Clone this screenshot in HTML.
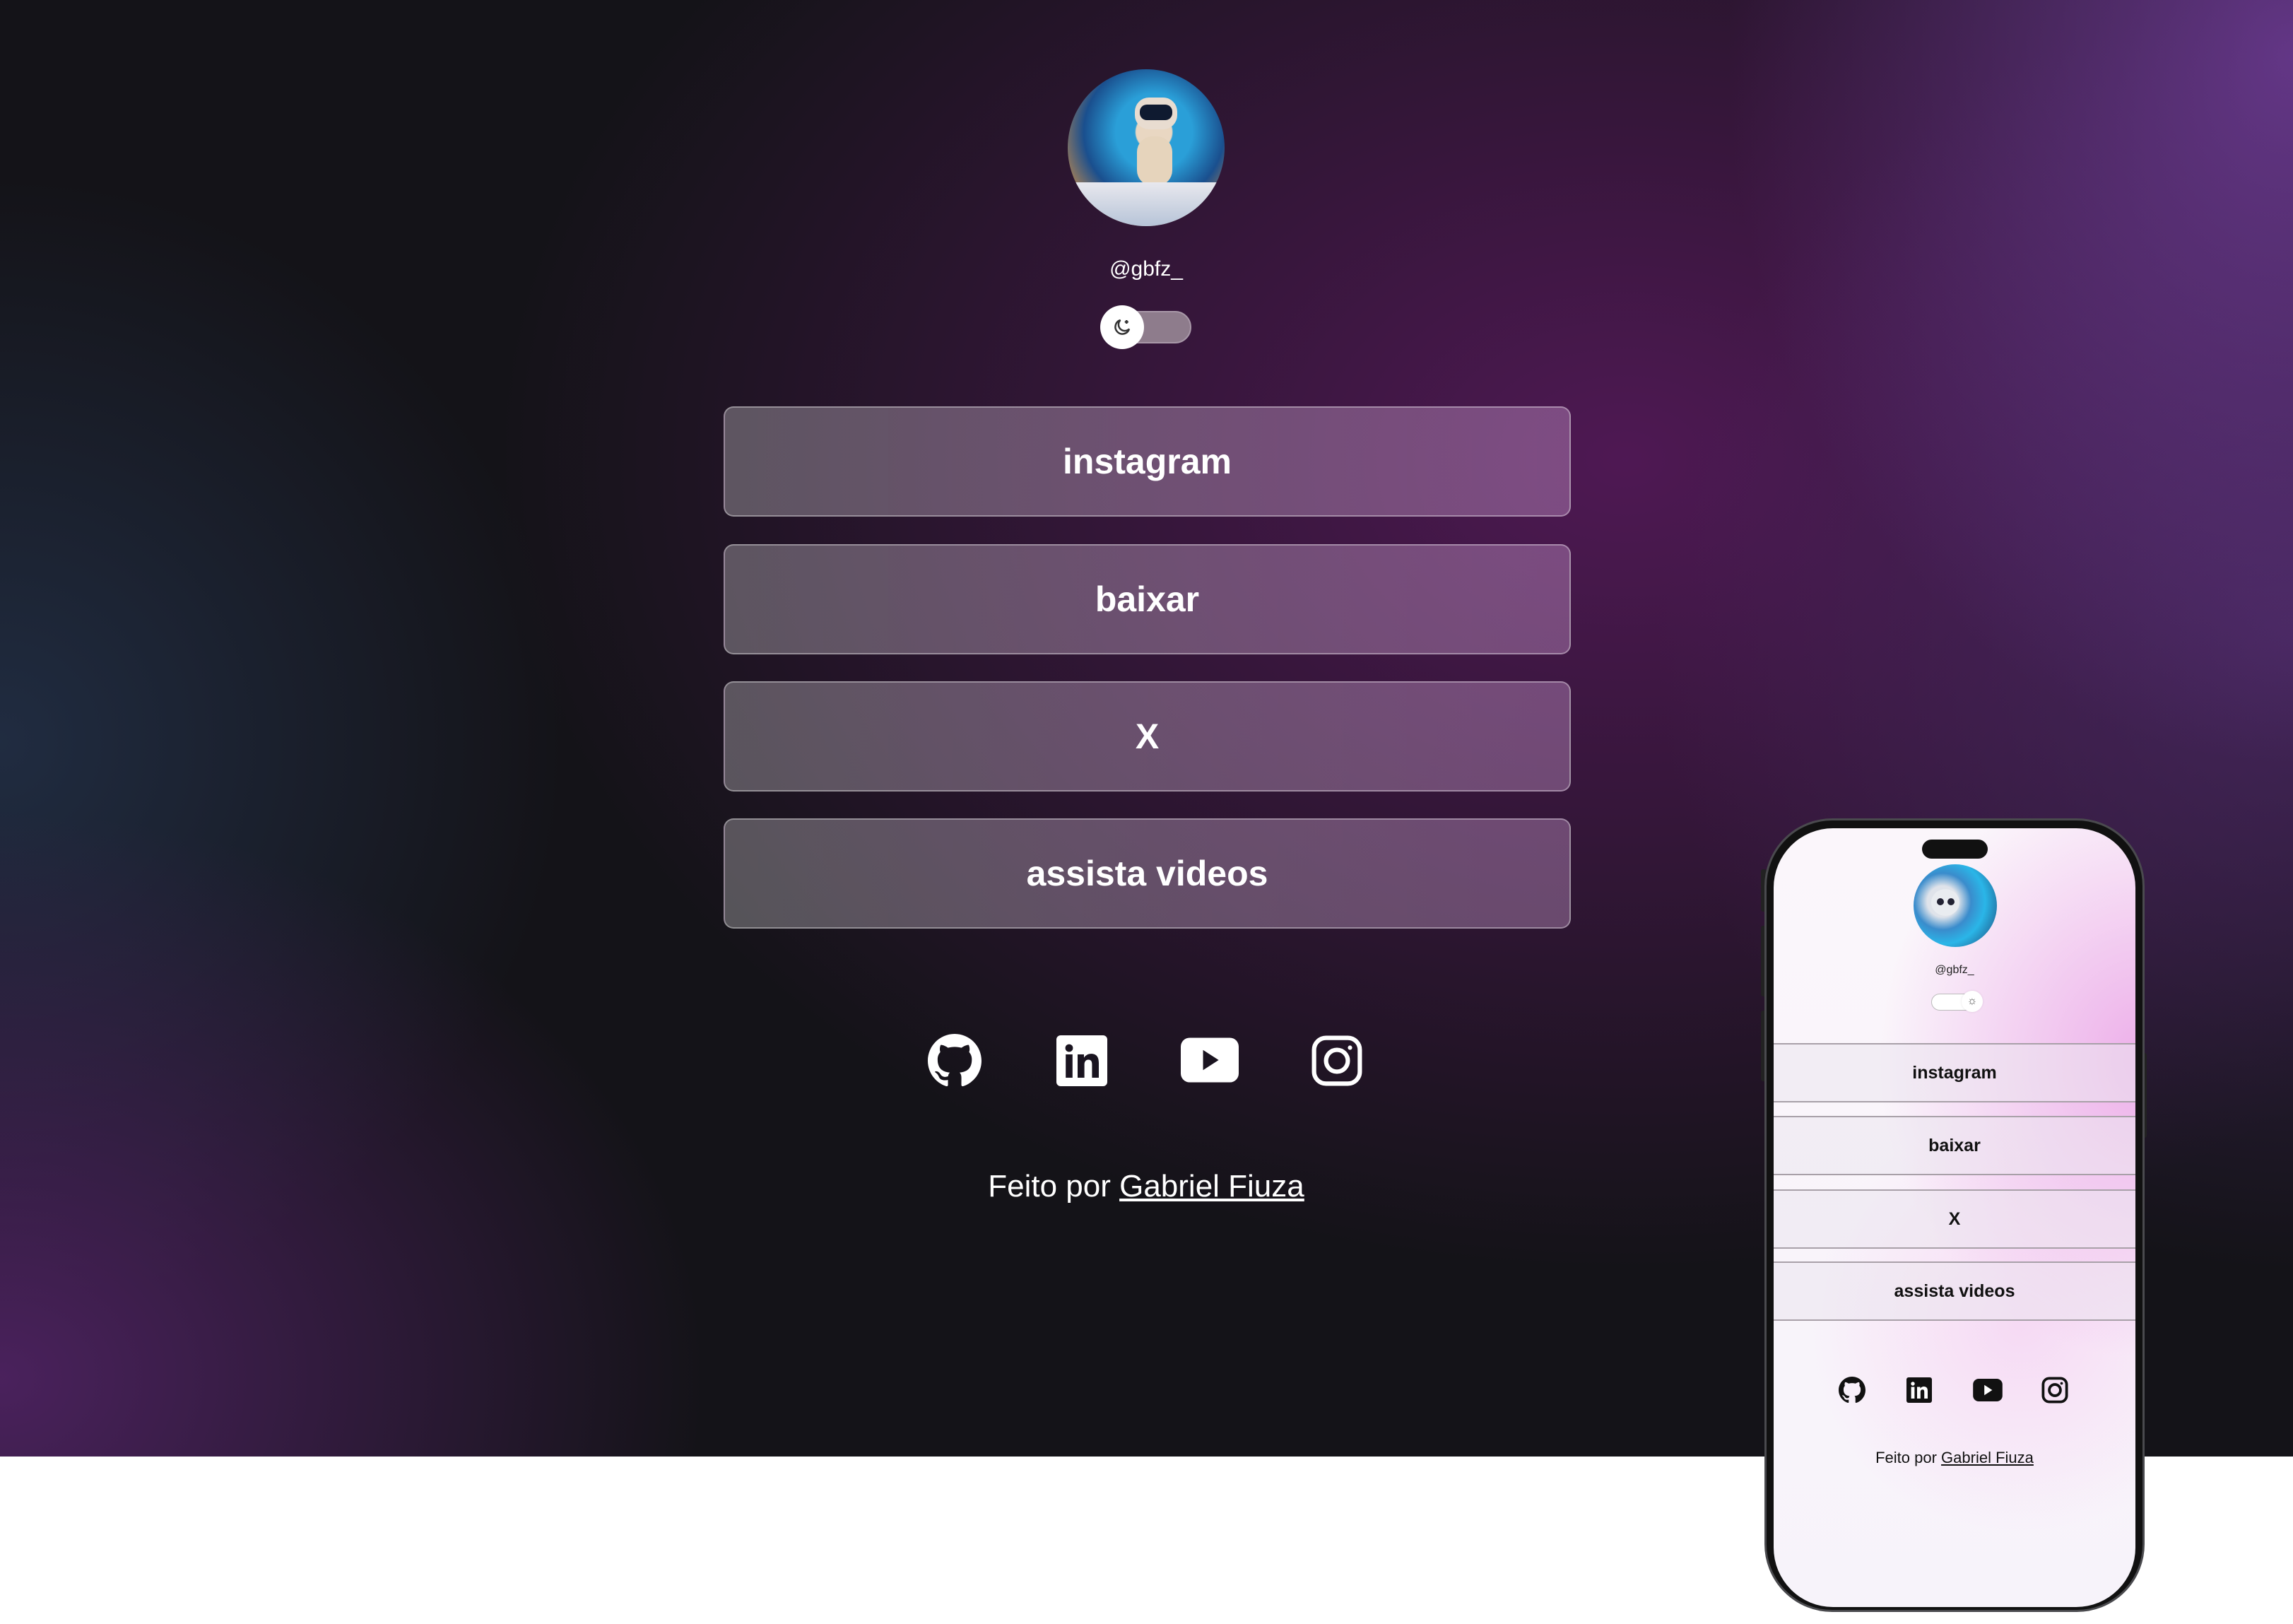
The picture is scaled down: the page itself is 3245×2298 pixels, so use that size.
<!DOCTYPE html>
<html><head><meta charset="utf-8"><style>
*{margin:0;padding:0;box-sizing:border-box}
body{width:3245px;height:2298px;position:relative;overflow:hidden;background:#fff;font-family:"Liberation Sans",sans-serif}
#bg{position:absolute;left:0;top:0;width:3245px;height:2061px;background:
radial-gradient(ellipse 800px 1000px at 3245px 80px,rgba(110,60,150,.85),rgba(110,60,150,0) 100%),
radial-gradient(ellipse 900px 900px at 3245px 900px,rgba(80,45,110,.7),rgba(80,45,110,0) 100%),
radial-gradient(ellipse 1600px 1150px at 2300px 650px,rgba(85,25,90,.9),rgba(85,25,90,0) 100%),
radial-gradient(ellipse 1000px 800px at 0px 1950px,rgba(80,35,100,.9),rgba(80,35,100,0) 100%),
radial-gradient(ellipse 800px 800px at 0px 1050px,rgba(35,50,75,.8),rgba(35,50,75,0) 100%),
#141318}
.btn{position:absolute;left:1024px;width:1199px;height:156px;border:2.5px solid rgba(255,255,255,.35);border-radius:14px;background:linear-gradient(90deg,rgba(255,255,255,.28),rgba(230,180,235,.33));color:#fff;font-weight:bold;font-size:50px;display:flex;align-items:center;justify-content:center}
.mb{position:absolute;left:2510px;width:512px;height:84px;border-top:2px solid #a8a0a8;border-bottom:2px solid #a8a0a8;background:rgba(235,230,238,.55);color:#111;font-weight:bold;font-size:25px;display:flex;align-items:center;justify-content:center}
.ic{position:absolute}
</style></head><body>
<div id="bg"></div>

<div style="position:absolute;left:1511px;top:98px;width:222px;height:222px;border-radius:50%;overflow:hidden;background:radial-gradient(circle at 55% 40%,#e9d7c2 0 14%,#2a9fd8 15% 30%,#1a4f8e 55%,#c48a4a 80%,#e8e0d8 100%)">
<div style="position:absolute;left:95px;top:40px;width:60px;height:45px;border-radius:20px;background:#e8dcd0"></div>
<div style="position:absolute;left:102px;top:50px;width:46px;height:22px;border-radius:10px;background:#0f1a30"></div>
<div style="position:absolute;left:98px;top:95px;width:50px;height:70px;border-radius:22px;background:#e6d4bc"></div>
<div style="position:absolute;left:0;top:160px;width:222px;height:62px;background:linear-gradient(#e8e8ee,#b7c4d8)"></div>
</div>
<div style="position:absolute;left:1522px;top:364px;width:200px;text-align:center;color:#fff;font-size:30px">@gbfz_</div>
<div style="position:absolute;left:1559px;top:440px;width:127px;height:46px;border-radius:23px;background:#8e7c8c;border:2px solid #a898a8"></div>
<div style="position:absolute;left:1557px;top:432px;width:62px;height:62px;border-radius:50%;background:#fff;display:flex;align-items:center;justify-content:center">
<svg width="30" height="30" viewBox="0 0 24 24" fill="none" stroke="#333" stroke-width="2"><path d="M20 14A8 8 0 1 1 10 4a6 6 0 0 0 10 10z"/><path d="M17 4v4M15 6h4"/></svg></div>

<div class="btn" style="top:575px">instagram</div>
<div class="btn" style="top:770px">baixar</div>
<div class="btn" style="top:964px">X</div>
<div class="btn" style="top:1158px">assista videos</div>

<svg class="ic" style="left:1313px;top:1463px" width="76" height="76" viewBox="0 0 16 16" fill="#fff"><path d="M8 0C3.58 0 0 3.58 0 8c0 3.54 2.29 6.53 5.47 7.59.4.07.55-.17.55-.38 0-.19-.01-.82-.01-1.49-2.01.37-2.53-.49-2.690-.94-.09-.23-.48-.94-.82-1.13-.28-.15-.68-.52-.01-.53.63-.01 1.080.58 1.230.82.72 1.21 1.87.87 2.33.66.07-.52.28-.87.51-1.07-1.78-.2-3.64-.89-3.64-3.95 0-.87.31-1.59.82-2.15-.08-.2-.36-1.02.08-2.12 0 0 .67-.21 2.2.82.64-.18 1.32-.27 2-.27.68 0 1.36.09 2 .27 1.53-1.04 2.2-.82 2.2-.82.44 1.1.16 1.92.08 2.12.51.56.82 1.27.82 2.15 0 3.07-1.87 3.75-3.65 3.95.29.25.54.73.54 1.48 0 1.07-.01 1.93-.01 2.2 0 .21.15.46.55.38A8.013 8.013 0 0 0 16 8c0-4.42-3.58-8-8-8z"/></svg>
<svg class="ic" style="left:1495px;top:1465px" width="72" height="72" viewBox="0 0 24 24"><rect x="0" y="0" width="24" height="24" rx="2" fill="#fff"/><circle cx="6" cy="6" r="1.8" fill="#1a1420"/><rect x="4.4" y="9" width="3.2" height="11" fill="#1a1420"/><path d="M10 9h3v1.6c.6-1.1 1.9-1.9 3.4-1.9 2.6 0 3.6 1.6 3.6 4.4V20h-3.2v-6.2c0-1.4-.4-2.3-1.7-2.3s-1.9 1-1.9 2.3V20H10z" fill="#1a1420"/></svg>
<svg class="ic" style="left:1671px;top:1468px" width="82" height="64" viewBox="0 0 26 20"><rect width="26" height="20" rx="4" fill="#fff"/><path d="M10 5.5v9l7-4.5z" fill="#1a1420"/></svg>
<svg class="ic" style="left:1855px;top:1464px" width="74" height="74" viewBox="0 0 24 24" fill="none" stroke="#fff" stroke-width="2"><rect x="1.5" y="1.5" width="21" height="21" rx="5.5"/><circle cx="12" cy="12" r="5"/><circle cx="18" cy="6" r="1" fill="#fff" stroke="none"/></svg>

<div style="position:absolute;left:1222px;top:1654px;width:800px;text-align:center;color:#fff;font-size:44px">Feito por <span style="text-decoration:underline">Gabriel Fiuza</span></div>

<!-- phone -->
<div style="position:absolute;left:2492px;top:1230px;width:8px;height:60px;background:#222;border-radius:3px"></div>
<div style="position:absolute;left:2492px;top:1310px;width:8px;height:100px;background:#222;border-radius:3px"></div>
<div style="position:absolute;left:2492px;top:1430px;width:8px;height:100px;background:#222;border-radius:3px"></div>
<div style="position:absolute;left:3030px;top:1490px;width:8px;height:120px;background:#222;border-radius:3px"></div>
<div style="position:absolute;left:2497px;top:1158px;width:538px;height:1123px;border-radius:96px;background:#111;border:3px solid #4a4a4e"></div>
<div style="position:absolute;left:2510px;top:1172px;width:512px;height:1102px;border-radius:84px;overflow:hidden;background:
radial-gradient(ellipse 380px 420px at 530px 330px,rgba(236,170,232,.95),rgba(236,170,232,0) 100%),
radial-gradient(ellipse 300px 300px at 350px 700px,rgba(245,200,240,.6),rgba(245,200,240,0) 100%),
linear-gradient(#fbf6fb,#f7f3fa)">
</div>
<div style="position:absolute;left:2720px;top:1188px;width:93px;height:27px;border-radius:14px;background:#111"></div>
<div style="position:absolute;left:2708px;top:1223px;width:118px;height:117px;border-radius:50%;overflow:hidden;background:radial-gradient(circle at 35% 45%,#dfe3ea 0 22%,#3a8ccc 40%,#2ab6e8 60%,#1d3b6a 100%)">
<div style="position:absolute;left:25px;top:35px;width:40px;height:38px;border-radius:50%;background:#e9ecf0"></div>
<div style="position:absolute;left:33px;top:48px;width:10px;height:10px;border-radius:50%;background:#223"></div>
<div style="position:absolute;left:48px;top:48px;width:10px;height:10px;border-radius:50%;background:#223"></div>
</div>
<div style="position:absolute;left:2666px;top:1364px;width:200px;text-align:center;color:#222;font-size:16px">@gbfz_</div>
<div style="position:absolute;left:2733px;top:1406px;width:62px;height:24px;border-radius:12px;background:#fff;border:1.5px solid #bbb"></div>
<div style="position:absolute;left:2776px;top:1402px;width:30px;height:30px;border-radius:50%;background:#fff;box-shadow:0 0 3px rgba(0,0,0,.1);font-size:16px;color:#555;text-align:center;line-height:30px">☼</div>

<div class="mb" style="top:1476px">instagram</div>
<div class="mb" style="top:1579px">baixar</div>
<div class="mb" style="top:1683px">X</div>
<div class="mb" style="top:1785px">assista videos</div>

<svg class="ic" style="left:2602px;top:1948px" width="38" height="38" viewBox="0 0 16 16" fill="#111"><path d="M8 0C3.58 0 0 3.58 0 8c0 3.54 2.29 6.53 5.47 7.59.4.07.55-.17.55-.38 0-.19-.01-.82-.01-1.49-2.01.37-2.53-.49-2.69-.94-.09-.23-.48-.94-.82-1.13-.28-.15-.68-.52-.01-.53.63-.01 1.08.58 1.23.82.72 1.21 1.87.87 2.33.66.07-.52.28-.87.51-1.07-1.78-.2-3.64-.89-3.64-3.95 0-.87.31-1.59.82-2.15-.08-.2-.36-1.02.08-2.12 0 0 .67-.21 2.2.82.64-.18 1.32-.27 2-.27.68 0 1.36.09 2 .27 1.53-1.04 2.2-.82 2.2-.82.44 1.1.16 1.92.08 2.12.51.56.82 1.27.82 2.15 0 3.07-1.87 3.75-3.65 3.95.29.25.54.73.54 1.48 0 1.07-.01 1.93-.01 2.2 0 .21.15.46.55.38A8.013 8.013 0 0 0 16 8c0-4.42-3.58-8-8-8z"/></svg>
<svg class="ic" style="left:2698px;top:1949px" width="36" height="36" viewBox="0 0 24 24"><rect width="24" height="24" rx="2" fill="#111"/><circle cx="6" cy="6" r="1.8" fill="#fff"/><rect x="4.4" y="9" width="3.2" height="11" fill="#fff"/><path d="M10 9h3v1.6c.6-1.1 1.9-1.9 3.4-1.9 2.6 0 3.6 1.6 3.6 4.4V20h-3.2v-6.2c0-1.4-.4-2.3-1.7-2.3s-1.9 1-1.9 2.3V20H10z" fill="#fff"/></svg>
<svg class="ic" style="left:2792px;top:1951px" width="42" height="32" viewBox="0 0 26 20"><rect width="26" height="20" rx="5" fill="#111"/><path d="M10 5.5v9l7-4.5z" fill="#fff"/></svg>
<svg class="ic" style="left:2889px;top:1948px" width="38" height="38" viewBox="0 0 24 24" fill="none" stroke="#111" stroke-width="2.4"><rect x="1.5" y="1.5" width="21" height="21" rx="5.5"/><circle cx="12" cy="12" r="5"/><circle cx="18" cy="6" r="1.2" fill="#111" stroke="none"/></svg>

<div style="position:absolute;left:2566px;top:2050px;width:400px;text-align:center;color:#111;font-size:22px">Feito por <span style="text-decoration:underline">Gabriel Fiuza</span></div>
</body></html>
